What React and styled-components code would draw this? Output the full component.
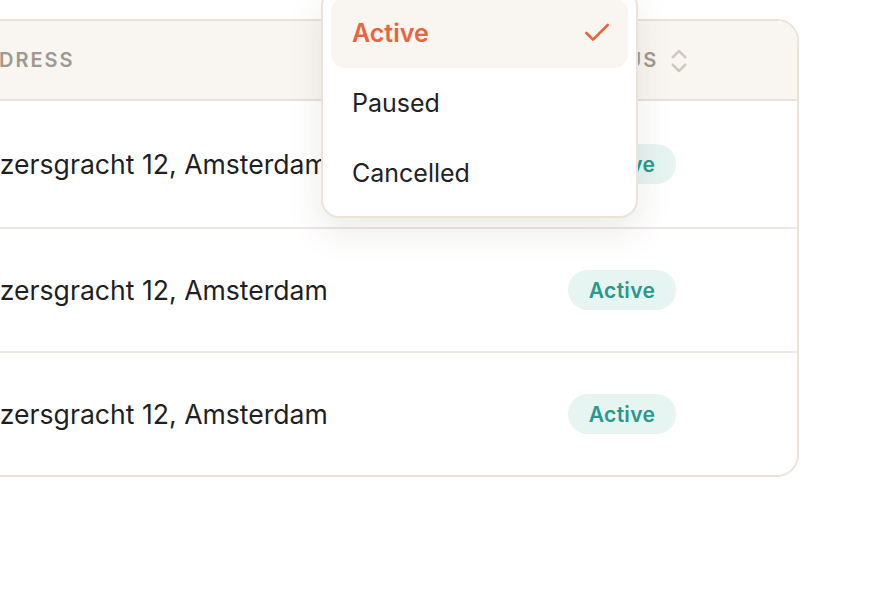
import React from "react"
import styled, { createGlobalStyle } from "styled-components"
import { Check, ChevronsUpDown } from "lucide-react"

const GlobalStyle = createGlobalStyle`
    html, body {
        margin: 0;
        padding: 0;
        background: #ffffff;
        overflow: hidden;
    }
    body {
        font-family: "Inter", "Liberation Sans", sans-serif;
        -webkit-font-smoothing: antialiased;
    }
`

const subscriptions = [
    { id: 1, address: "Keizersgracht 12, Amsterdam", status: "Active" },
    { id: 2, address: "Keizersgracht 12, Amsterdam", status: "Active" },
    { id: 3, address: "Keizersgracht 12, Amsterdam", status: "Active" },
]

const options = ["Active", "Paused", "Cancelled"]

function StatusMenu({ selected }) {
    return (
        <Menu>
            {options.map(option => (
                <MenuItem key={option} selected={option === selected}>
                    <span>{option}</span>
                    {option === selected && <Check size={32} strokeWidth={2} />}
                </MenuItem>
            ))}
        </Menu>
    )
}

export default function App() {
    return (
        <Page>
            <GlobalStyle />
            <Card>
                <HeaderRow>
                    <HeadCell>Address</HeadCell>
                    <HeadCell>
                        Status
                        <SortIcon>
                            <ChevronsUpDown size={30} strokeWidth={2} />
                        </SortIcon>
                    </HeadCell>
                </HeaderRow>
                {subscriptions.map(row => (
                    <Row key={row.id}>
                        <Cell>{row.address}</Cell>
                        <Cell>
                            <Badge>{row.status}</Badge>
                        </Cell>
                    </Row>
                ))}
            </Card>
            <StatusMenu selected="Active" />
        </Page>
    )
}

const Page = styled.div`
    position: relative;
    width: 880px;
    height: 600px;
    padding-top: 19px;
    box-sizing: border-box;
`

const Card = styled.div`
    margin-left: -72px;
    width: 871px;
    box-sizing: border-box;
    border: 2px solid #e9e3da;
    border-radius: 22px;
    overflow: hidden;
    background: #ffffff;
`

const HeaderRow = styled.div`
    display: grid;
    grid-template-columns: 1fr 229px;
    height: 80px;
    box-sizing: border-box;
    background: #f9f6f1;
    border-bottom: 2px solid #e9e3da;
`

const HeadCell = styled.div`
    display: flex;
    align-items: center;
    gap: 6px;
    padding-left: 36px;
    font-size: 20px;
    font-weight: 600;
    letter-spacing: 2px;
    text-transform: uppercase;
    color: #a09990;

    &:last-child {
        padding-left: 0;
    }
`

const SortIcon = styled.span`
    display: flex;
    align-items: center;
    color: #d0c9c0;
    margin-top: 2px;
`

const Row = styled.div`
    display: grid;
    grid-template-columns: 1fr 229px;
    height: 124px;
    box-sizing: border-box;
    border-bottom: 2px solid #ede8e2;

    &:nth-child(2) {
        height: 128px;
    }

    &:last-child {
        border-bottom: none;
        height: 122px;
    }
`

const Cell = styled.div`
    display: flex;
    align-items: center;
    padding-left: 31px;
    font-size: 26.6px;
    color: #1f1f1f;
    white-space: nowrap;

    &:last-child {
        padding-left: 0;
    }
`

const Badge = styled.span`
    display: inline-flex;
    align-items: center;
    justify-content: center;
    height: 40px;
    width: 108px;
    border-radius: 20px;
    background: #e6f4f2;
    color: #28998a;
    font-size: 21px;
    font-weight: 600;
    letter-spacing: 0.3px;
`

const Menu = styled.div`
    position: absolute;
    top: -12px;
    left: 321px;
    width: 317px;
    box-sizing: border-box;
    padding: 8px;
    background: #ffffff;
    border: 2px solid #e9e3da;
    border-radius: 18px;
    box-shadow: 0 14px 36px rgba(60, 45, 30, 0.1);
    display: flex;
    flex-direction: column;
`

const MenuItem = styled.div`
    display: flex;
    align-items: center;
    justify-content: space-between;
    height: 70px;
    padding: 0 15px 0 21px;
    border-radius: 14px;
    font-size: 25px;
    font-weight: ${props => (props.selected ? 600 : 400)};
    color: ${props => (props.selected ? "#e8643c" : "#222222")};
    background: ${props => (props.selected ? "#f9f6f1" : "transparent")};
`
